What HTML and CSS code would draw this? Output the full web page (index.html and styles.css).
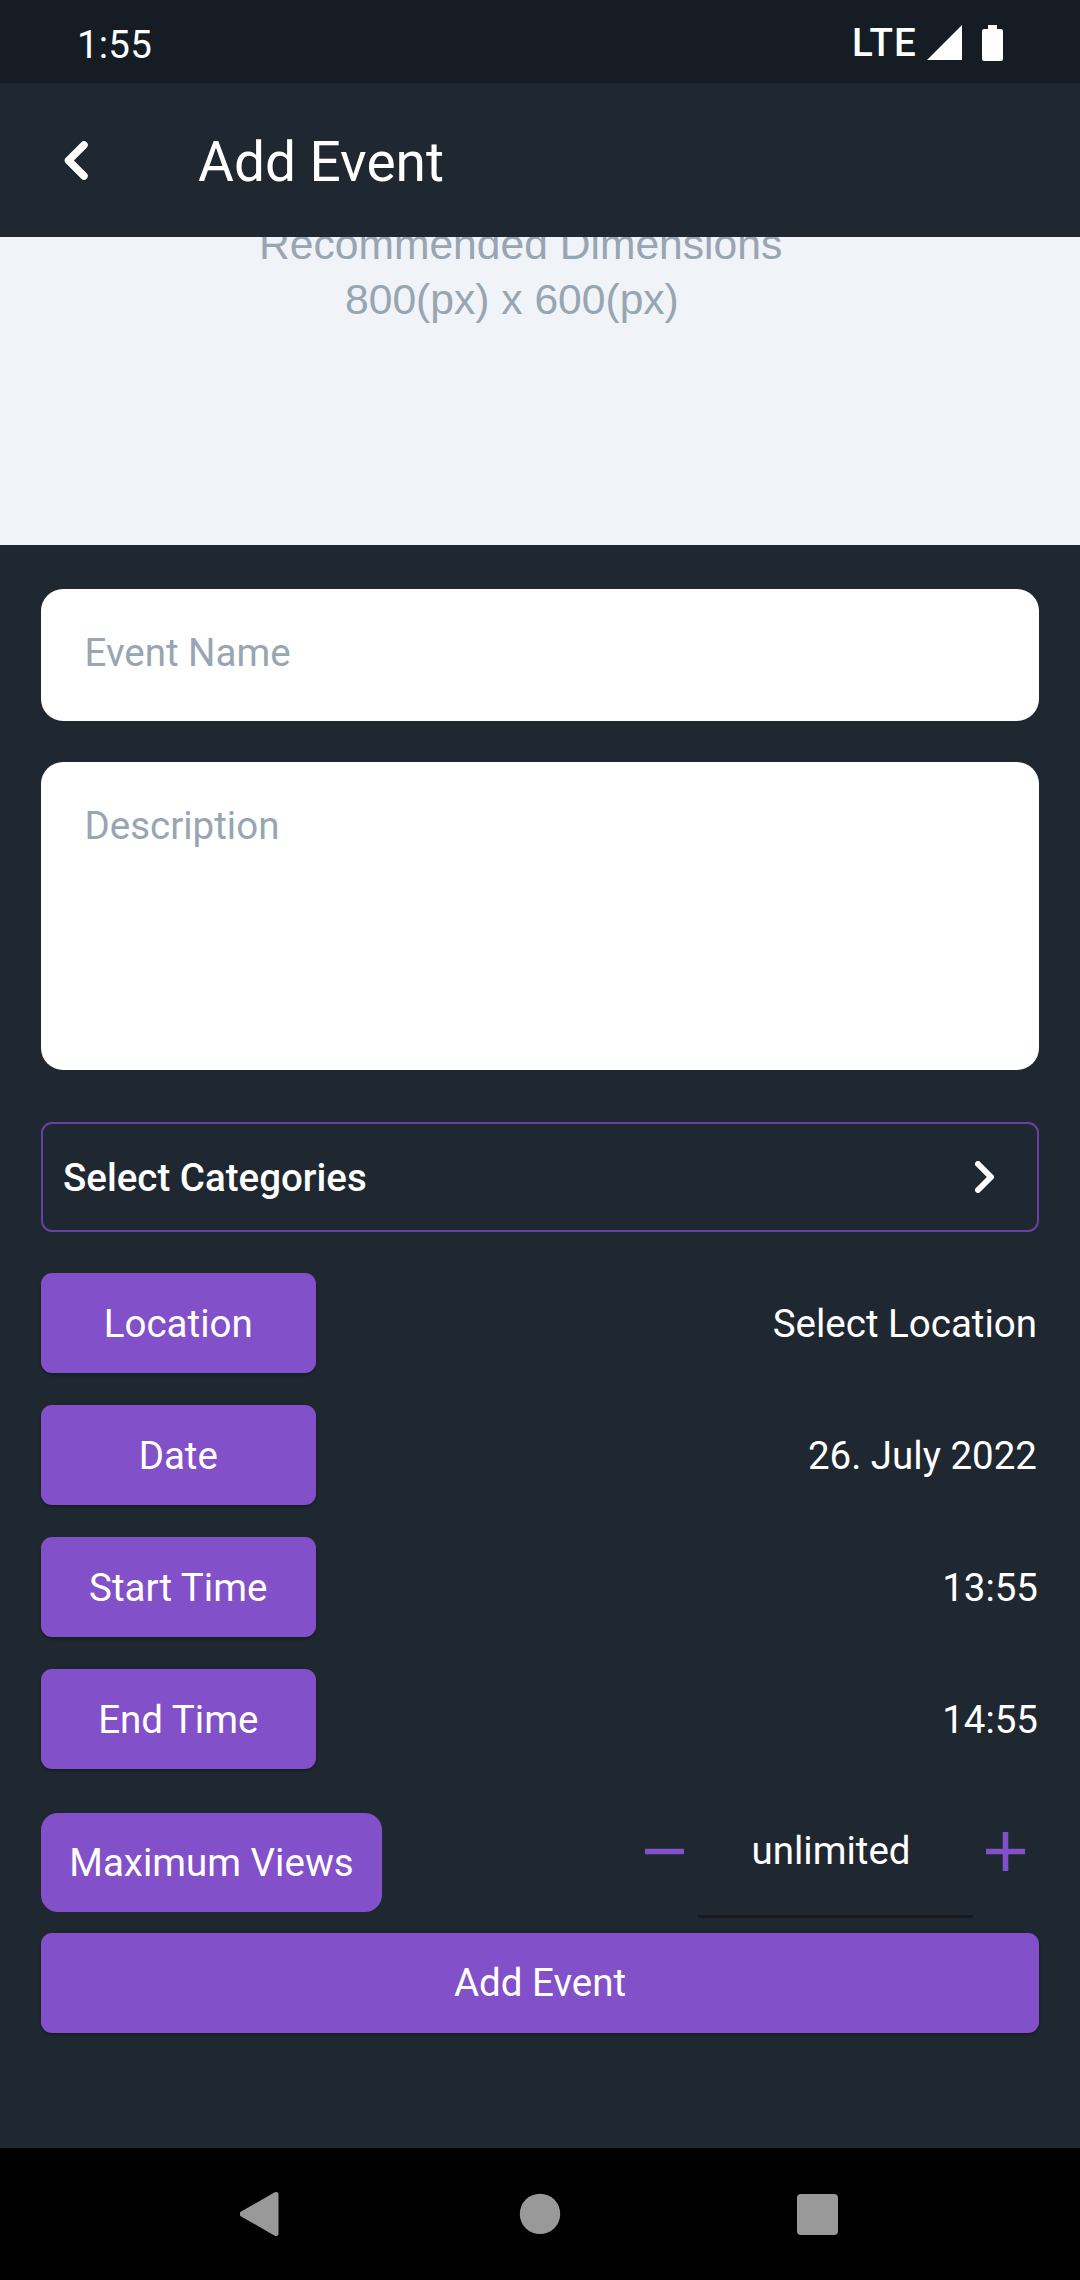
FILE: index.html
```html
<!DOCTYPE html>
<html lang="en">
<head>
<meta charset="utf-8">
<title>Add Event</title>
<link rel="stylesheet" href="styles.css">
</head>
<body>
<div class="screen">
  <header class="status">
    <span class="clock">1:55</span>
    <div class="status-icons">
      <span class="network">LTE</span>
      <svg class="signal" viewBox="0 0 35 35"><path d="M35 0V35H0Z"/></svg>
      <svg class="battery" viewBox="0 0 21 36"><path d="M6 0h9v4h4a2 2 0 0 1 2 2v28a2 2 0 0 1-2 2H2a2 2 0 0 1-2-2V6a2 2 0 0 1 2-2h4Z"/></svg>
    </div>
  </header>
  <div class="appbar">
    <svg class="back" viewBox="0 0 24 39"><path d="M20 4 4.500 19.500 20 35"/></svg>
    <h1 class="title">Add Event</h1>
  </div>
  <div class="hero">
    <p class="hero-line">Recommended Dimensions</p>
    <p class="hero-line hero-size">800(px) x 600(px)</p>
  </div>
  <main class="form">
    <div class="field">Event Name</div>
    <div class="field field-large">Description</div>
    <div class="categories">
      <span class="categories-label">Select Categories</span>
      <svg class="next" viewBox="0 0 19 32"><path d="M3 3 16 16 3 29"/></svg>
    </div>
    <div class="rows">
      <div class="row"><button class="btn">Location</button><span class="value">Select Location</span></div>
      <div class="row"><button class="btn">Date</button><span class="value">26. July 2022</span></div>
      <div class="row"><button class="btn">Start Time</button><span class="value">13:55</span></div>
      <div class="row"><button class="btn">End Time</button><span class="value">14:55</span></div>
    </div>
    <div class="views">
      <div class="views-label">Maximum Views</div>
      <div class="stepper">
        <svg class="step" viewBox="0 0 39 39"><path d="M0 19.500H39"/></svg>
        <span class="count">unlimited</span>
        <svg class="step" viewBox="0 0 39 39"><path d="M0 19.500H39M19.500 0V39"/></svg>
      </div>
    </div>
    <button class="btn submit">Add Event</button>
  </main>
  <nav class="navbar">
    <svg class="nav-icon" viewBox="0 0 46 46"><path d="M36 3.500V42.500L2 23Z" stroke="#999" stroke-width="5" stroke-linejoin="round"/></svg>
    <svg class="nav-icon" viewBox="0 0 46 46"><circle cx="23" cy="22.900" r="20.200"/></svg>
    <svg class="nav-icon" viewBox="0 0 46 46"><rect x="2" y="3" width="41" height="41" rx="4"/></svg>
  </nav>
</div>
</body>
</html>
```

FILE: styles.css
```css
* { box-sizing: border-box; }

body {
  margin: 0;
  background: #1f2730;
  color: #fff;
  font-family: Roboto, "Noto Sans", sans-serif;
  font-size: 38.5px;
}

.screen {
  display: flex;
  flex-direction: column;
  width: 1080px;
  height: 2280px;
  overflow: hidden;
}

.status {
  display: flex;
  justify-content: space-between;
  height: 83px;
  padding: 0 77px 0 77px;
  background: #161c23;
}

.clock {
  line-height: 90px;
  letter-spacing: 0.2px;
}

.status-icons {
  display: flex;
  align-items: flex-start;
}

.network {
  margin-right: 10px;
  line-height: 85px;
  font-weight: 500;
  letter-spacing: 1.2px;
}

.signal {
  width: 35px;
  height: 35px;
  margin: 25px 20px 0 0;
  fill: #fff;
}

.battery {
  width: 21px;
  height: 36px;
  margin-top: 25px;
  fill: #fff;
}

.appbar {
  display: flex;
  align-items: center;
  height: 154px;
  padding-left: 64px;
}

.back {
  width: 24px;
  height: 39px;
  fill: none;
  stroke: #fff;
  stroke-width: 7.5;
  stroke-linecap: round;
  stroke-linejoin: round;
}

.title {
  margin: 0 0 0 110px;
  padding-top: 4px;
  font-size: 55px;
  font-weight: 400;
}

.hero {
  height: 308px;
  overflow: hidden;
  background: #f0f3f8;
  color: #98a5b2;
  font-family: "Liberation Sans", Arial, sans-serif;
  font-size: 42.6px;
  line-height: 55px;
}

.hero-line { margin: -20px 0 0 259px; }

.hero-size { margin: 0 0 0 345px; }

.form {
  display: flex;
  flex-direction: column;
  flex: 1;
  padding: 43.5px 41px 0;
}

.field {
  height: 132.5px;
  padding: 41px 43.5px;
  border-radius: 22px;
  background: #fff;
  color: #98a5b2;
  line-height: 46px;
}

.field-large {
  height: 308px;
  margin-top: 41px;
}

.categories {
  display: flex;
  align-items: center;
  justify-content: space-between;
  height: 110px;
  margin-top: 52px;
  padding: 0 43px 0 20px;
  border: 2px solid #683fa4;
  border-radius: 11px;
}

.categories-label { font-weight: 500; }

.next {
  width: 19px;
  height: 32px;
  fill: none;
  stroke: #fff;
  stroke-width: 6;
  stroke-linecap: round;
  stroke-linejoin: round;
}

.rows {
  display: grid;
  gap: 32px;
  margin-top: 41px;
}

.row {
  display: flex;
  align-items: center;
  justify-content: space-between;
  height: 100px;
}

.value { padding-right: 2px; }

.row:nth-child(n+3) .value { padding-right: 1px; }

.btn {
  width: 274.500px;
  height: 99.500px;
  padding: 0;
  border: 0;
  border-radius: 11px;
  background: #8250c9;
  box-shadow: 0 2px 3px rgba(0, 0, 0, 0.25);
  color: #fff;
  font: inherit;
}

.views {
  display: flex;
  justify-content: space-between;
  height: 149px;
  margin-top: 15px;
}

.views-label {
  width: 341px;
  height: 99.5px;
  margin-top: 28.5px;
  border-radius: 17px;
  background: #8250c9;
  line-height: 100px;
  text-align: center;
}

.stepper {
  display: flex;
  align-items: center;
  gap: 13.5px;
  height: 134px;
  margin-right: 14px;
}

.step {
  width: 39px;
  height: 39px;
  fill: none;
  stroke: #8250c9;
  stroke-width: 5.6;
}

.count {
  width: 275px;
  height: 134px;
  padding-right: 8px;
  border-bottom: 3px solid #161a1f;
  line-height: 134px;
  text-align: center;
}

.submit { width: 100%; }

.navbar {
  display: flex;
  justify-content: center;
  gap: 231.5px;
  height: 132px;
  padding-top: 43px;
  background: #000;
}

.nav-icon {
  width: 46px;
  height: 46px;
  fill: #999;
}
```
